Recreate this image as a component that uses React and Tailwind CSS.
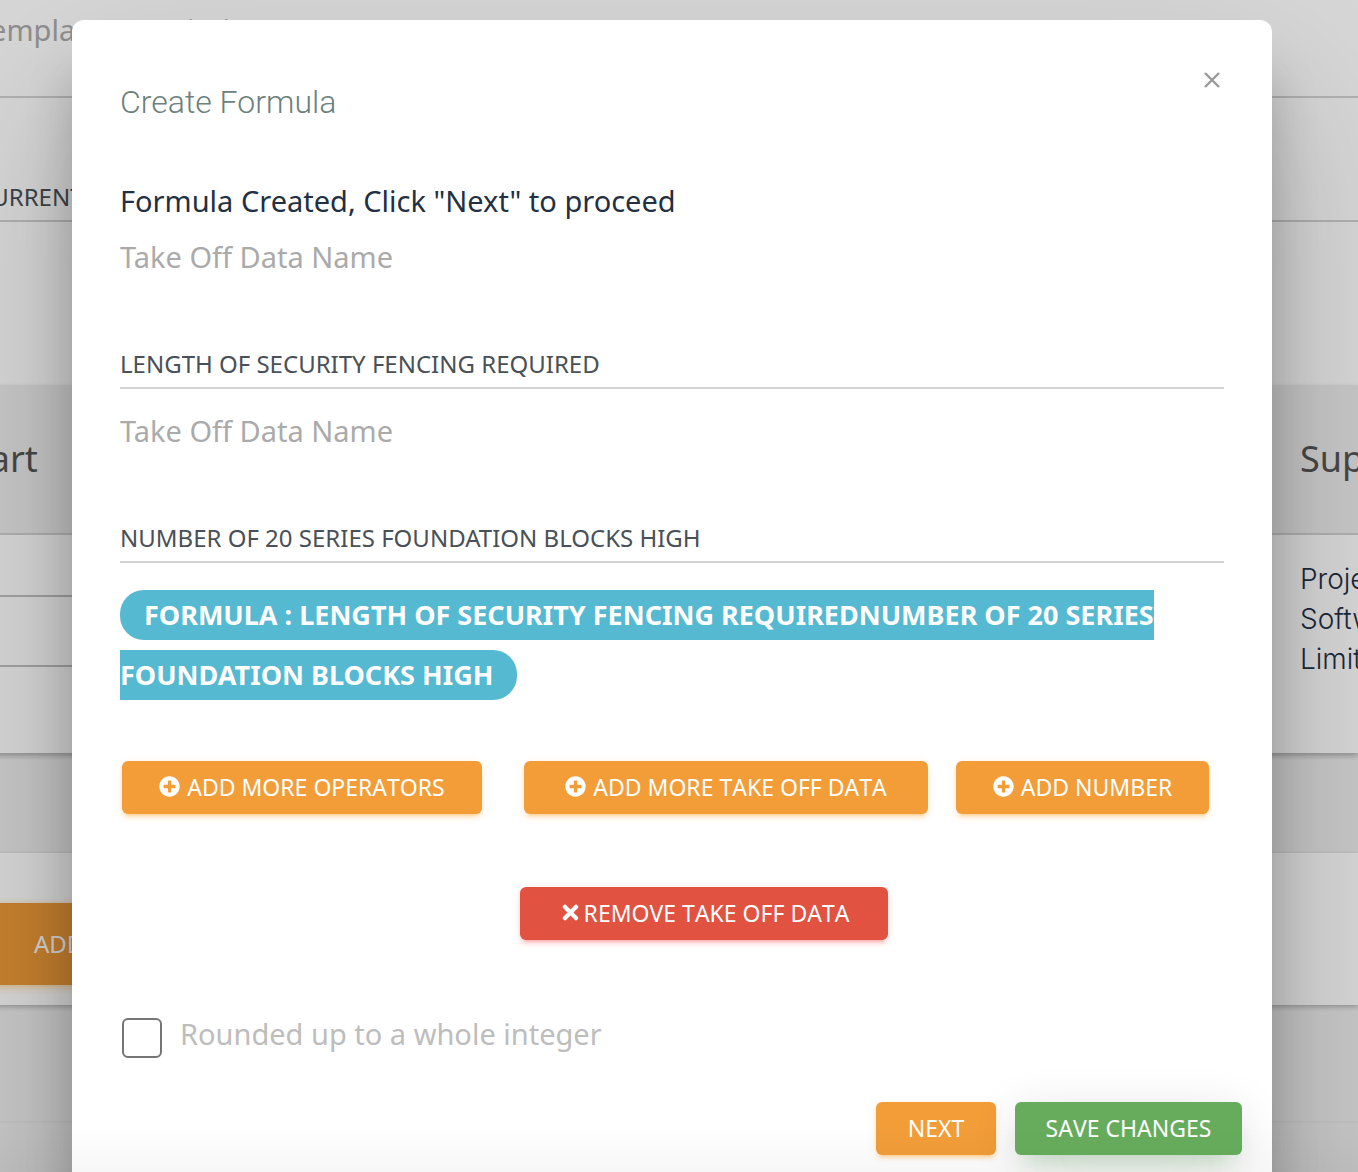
import { FaPlusCircle, FaTimes } from "react-icons/fa";

const button =
  "inline-flex items-center justify-center rounded-md h-[53px] pb-0.5 whitespace-nowrap text-[23px] leading-8 uppercase text-white [font-kerning:none]";
const orange =
  "gap-[7px] bg-[#f29d38] shadow-[0_4px_4px_0_rgba(255,152,0,0.14),0_6px_2px_-4px_rgba(255,152,0,0.2),0_2px_10px_0_rgba(255,152,0,0.12)]";

function Field({ id, label, value }) {
  return (
    <div className="flex flex-col">
      <label htmlFor={id} className="text-[29px] leading-10 text-[#aaaaaa]">
        {label}
      </label>
      <input
        id={id}
        defaultValue={value}
        className="mt-16 mb-[22px] h-12 w-full border-b-2 border-[#d2d2d2] bg-transparent pb-0.5 text-2xl text-[#495057] uppercase outline-none"
      />
    </div>
  );
}

function Page() {
  return (
    <main className="-ml-8 min-h-screen overflow-hidden bg-[#eeeeee]">
      <section className="bg-white pb-[163px]">
        <div className="h-[98px] border-b-2 border-[#d2d2d2] pt-2.5 pl-2 text-[29px] leading-10 text-[#aaaaaa]">
          Template Description
        </div>
        <div className="flex h-[124px] items-end border-b-2 border-[#d2d2d2] pb-[7px] pl-2 text-2xl text-[#495057]">
          CURRENT
        </div>
      </section>
      <table className="w-full table-fixed border-collapse bg-white text-left shadow-[0_3px_5px_rgba(0,0,0,0.25)]">
        <thead>
          <tr className="h-[149px] border-b-2 border-[#d2d2d2] bg-[#eeeeee] text-4xl text-[#555555]">
            <th className="font-normal">Part</th>
            <th className="w-[158px] pl-[100px] font-normal">Supplier</th>
          </tr>
        </thead>
        <tbody>
          <tr className="h-[62px]">
            <td className="border-b-2 border-[#c0c0c0]" />
            <td
              rowSpan={3}
              className="pt-6 pl-[100px] align-top font-['Inter'] text-[28px] leading-10 font-light text-[#233044]"
            >
              Project Software Limited
            </td>
          </tr>
          <tr className="h-[70px]">
            <td className="border-b-2 border-[#c0c0c0]" />
          </tr>
          <tr className="h-[87px]">
            <td />
          </tr>
        </tbody>
      </table>
      <section className="mt-[100px] h-[152px] bg-white pt-[50px] shadow-[0_2px_5px_rgba(0,0,0,0.25)]">
        <button className="h-[82px] w-60 bg-[#ed9a38] pl-[66px] text-left text-2xl text-white shadow-[0_2px_8px_rgba(255,152,0,0.4)]">
          ADD
        </button>
      </section>
      <footer className="mt-[116px] h-[51px] border-t-2 border-[#e6e6e6]" />
    </main>
  );
}

export default function App() {
  return (
    <div className="relative h-screen overflow-hidden font-['Noto_Sans',sans-serif]">
      <Page />
      <div className="absolute inset-0 overflow-hidden bg-black/16 pt-5 pr-[86px] pl-[72px]">
        <div
          role="dialog"
          aria-labelledby="dialog-title"
          className="rounded-xl bg-white px-12 pt-12 pb-16 shadow-[0_54px_48px_0_rgba(0,0,0,0.2),0_80px_154px_0_rgba(0,0,0,0.22)]"
        >
          <header className="flex items-start justify-between">
            <h1
              id="dialog-title"
              className="pt-3 font-['Roboto'] text-[32px] leading-11 font-light text-[#6c807c]"
            >
              Create Formula
            </h1>
            <button aria-label="Close" className="flex h-6 w-6 items-center justify-center text-[#999999]">
              <svg viewBox="0 0 16 16" className="h-4 w-4" stroke="currentColor" strokeWidth="2.4">
                <path d="M1 1 15 15M15 1 1 15" />
              </svg>
            </button>
          </header>
          <form className="pt-[57px]" onSubmit={(e) => e.preventDefault()}>
            <h2 className="mb-4 text-[29px] leading-10 text-[#233044]">
              Formula Created, Click "Next" to proceed
            </h2>
            <Field id="takeoff-1" label="Take Off Data Name" value="Length of security fencing required" />
            <Field id="takeoff-2" label="Take Off Data Name" value="Number of 20 series foundation blocks high" />
            <p className="text-[27px] leading-[60px] font-bold text-white">
              <span className="rounded-[24px] bg-[#55b9d2] px-6 pt-1.5 pb-[7px]">
                FORMULA : LENGTH OF SECURITY FENCING REQUIREDNUMBER OF 20 SERIES FOUNDATION BLOCKS HIGH
              </span>
            </p>
            <div className="mt-14 flex pl-0.5">
              <button className={`${button} ${orange} mr-[42px] w-[360px]`}>
                <FaPlusCircle className="h-[21px] w-[21px]" />
                Add more operators
              </button>
              <button className={`${button} ${orange} mr-7 w-[404px]`}>
                <FaPlusCircle className="h-[21px] w-[21px]" />
                Add more take off data
              </button>
              <button className={`${button} ${orange} w-[253px]`}>
                <FaPlusCircle className="h-[21px] w-[21px]" />
                Add number
              </button>
            </div>
            <div className="mt-[73px] flex justify-center pl-16">
              <button
                className={`${button} w-[368px] gap-0.5 bg-[#e15241] shadow-[0_4px_4px_0_rgba(244,67,54,0.14),0_6px_2px_-4px_rgba(244,67,54,0.2),0_2px_10px_0_rgba(244,67,54,0.12)]`}
              >
                <FaTimes />
                Remove take off data
              </button>
            </div>
            <label className="mt-[74px] flex items-start gap-[18px] pl-0.5 text-[29px] leading-10 text-[#bdbdbd]">
              <input
                type="checkbox"
                className="mt-1 h-10 w-10 appearance-none rounded-md border-2 border-[#757575] bg-white"
              />
              Rounded up to a whole integer
            </label>
            <div className="-mr-[18px] mt-11 flex justify-end gap-[19px]">
              <button className={`${button} ${orange} w-[120px]`}>Next</button>
              <button
                className={`${button} w-[227px] bg-[#67ac5c] shadow-[0_28px_52px_-24px_rgba(76,175,80,0.42),0_8px_46px_0_rgba(0,0,0,0.12),0_16px_20px_-10px_rgba(76,175,80,0.2)]`}
              >
                Save changes
              </button>
            </div>
          </form>
        </div>
      </div>
      <div className="pointer-events-none absolute inset-x-0 bottom-0 h-12 bg-linear-to-b from-transparent to-black/3" />
    </div>
  );
}
